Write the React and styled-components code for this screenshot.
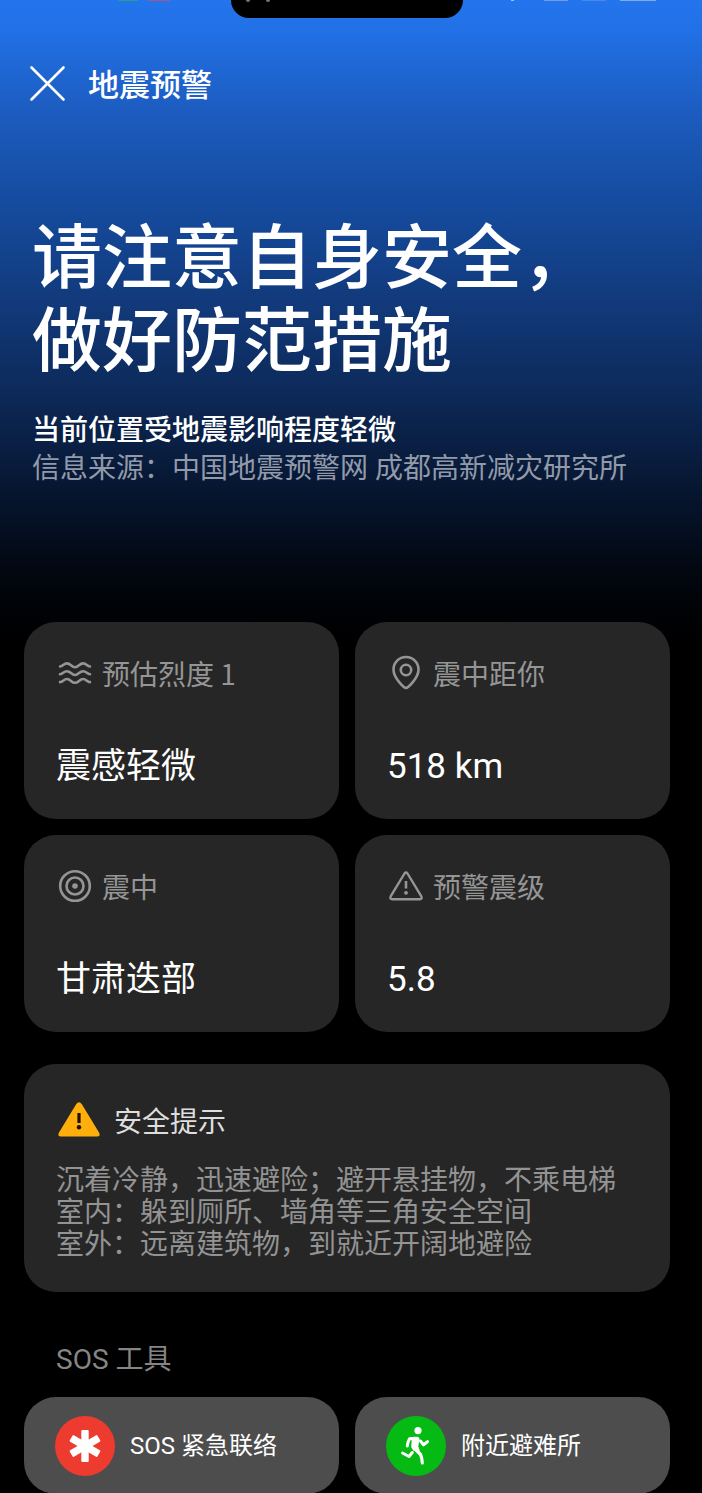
import React from "react";
import styled, { createGlobalStyle } from "styled-components";

const hanFont = `"Noto Sans CJK SC", Roboto, sans-serif`;

const GlobalStyle = createGlobalStyle`
  *, *::before, *::after { box-sizing: border-box; }
  body {
    margin: 0;
    background: #000;
    color: #fff;
    font-family: Roboto, "Noto Sans CJK SC", sans-serif;
  }
  h1, h2, h3, p, dl, dt, dd { margin: 0; font-weight: 400; }
`;

const Page = styled.div`
  background: linear-gradient(
    to bottom,
    #2474ee 0,
    #2170e5 32px,
    #1c5abc 120px,
    #154ca0 200px,
    #123a7c 300px,
    #0c2856 400px,
    #06142c 500px,
    #01040a 590px,
    #000 640px
  ) no-repeat #000;
`;

const StatusBar = styled.div`
  display: grid;
  grid-template-columns: 1fr 232px 1fr;
  height: 18px;
  padding-right: 8px;
`;

const StatusGroup = styled.div`
  display: flex;
  justify-content: ${(p) => (p.$end ? "flex-end" : "flex-start")};
  gap: ${(p) => (p.$end ? 14 : 10)}px;
  padding: ${(p) => (p.$end ? "0 38px 0 0" : "0 0 0 118px")};
`;

const StatusMark = styled.span`
  width: ${(p) => p.$width}px;
  height: 1px;
  margin-right: ${(p) => p.$space || 0}px;
  background: ${(p) => p.$color};
`;

const Island = styled.div`
  display: flex;
  gap: 16px;
  padding-left: 15px;
  background: #000;
  border-radius: 0 0 26px 26px;
`;

const IslandMark = styled.span`
  width: 4px;
  height: 2px;
  background: #777;
  border-radius: 0 0 2px 2px;
`;

const TopBar = styled.header`
  display: flex;
  align-items: center;
  gap: 20px;
  padding: 41px 28px 0;
`;

const CloseButton = styled.button`
  display: flex;
  padding: 0;
  border: 0;
  background: none;
  color: #fff;
`;

const Title = styled.h1`
  font-family: ${hanFont};
  font-size: 31px;
  line-height: 48px;
  font-weight: 500;
`;

const Hero = styled.section`
  padding: 111px 32px 134px;
`;

const Headline = styled.h2`
  font-size: 70px;
  line-height: 83px;
  font-weight: 500;
`;

const HeroText = styled.p`
  font-size: 28px;
  line-height: 38px;
  font-weight: ${(p) => (p.$muted ? 400 : 500)};
  color: ${(p) => (p.$muted ? "#929aaa" : "#fff")};
`;

const HeroNotes = styled.div`
  margin-top: 28px;
`;

const Content = styled.main`
  padding: 0 32px 0 24px;
`;

const CardGrid = styled.dl`
  display: grid;
  grid-template-columns: 1fr 1fr;
  gap: 16px;
`;

const Card = styled.div`
  padding: 32px 32px 28px;
  background: #262626;
  border-radius: 32px;
`;

const CardLabel = styled.dt`
  display: flex;
  align-items: center;
  gap: 8px;
  font-family: ${hanFont};
  font-size: 28px;
  line-height: 38px;
  color: #959595;
`;

const CardValue = styled.dd`
  margin-top: 51px;
  font-size: 35px;
  line-height: 48px;
`;

const Tips = styled.section`
  margin-top: 32px;
  padding: 36px 24px 31px 32px;
  background: #262626;
  border-radius: 32px;
`;

const TipsTitle = styled.h3`
  display: flex;
  align-items: center;
  gap: 12px;
  font-family: ${hanFont};
  font-size: 28px;
  line-height: 40px;
  color: #dedede;
`;

const TipsText = styled.p`
  margin-top: 25px;
  font-size: 28px;
  line-height: 32px;
  color: #939393;
`;

const SectionTitle = styled.h3`
  margin-top: 49px;
  padding-left: 32px;
  font-size: 28px;
  line-height: 38px;
  color: #858585;
`;

const Tools = styled.div`
  display: grid;
  grid-template-columns: 1fr 1fr;
  gap: 16px;
  margin-top: 18px;
`;

const ToolButton = styled.button`
  display: flex;
  align-items: center;
  gap: 15px;
  padding: 19px 31px 18px;
  border: 0;
  border-radius: 32px;
  background: #4d4d4d;
  color: #fff;
  font-family: inherit;
  font-size: 24px;
  line-height: 32px;
  text-align: left;
`;

const ToolBadge = styled.span`
  display: flex;
  flex: none;
  width: 60px;
  height: 60px;
  border-radius: 50%;
  background: ${(p) => p.$color};
`;

const Icon = styled.svg`
  display: block;
  flex: none;
  fill: none;
  stroke: currentColor;
  stroke-linecap: round;
  stroke-linejoin: round;
`;

const CloseIcon = () => (
  <Icon width="40" height="40" viewBox="0 0 40 40" strokeWidth="2.6" aria-hidden="true">
    <path d="M3.5 4.5 35.5 36.5M35.5 4.5 3.5 36.5" />
  </Icon>
);

const WavesIcon = () => (
  <Icon width="38" height="38" viewBox="0 0 38 38" strokeWidth="2.6" aria-hidden="true">
    {[12, 19.8, 27.6].map((y) => (
      <path
        key={y}
        d={`M4 ${y + 0.5}C7 ${y + 0.5} 7.5 ${y - 2.6} 11 ${y - 2.6}C14.500 ${y - 2.6} 15.500 ${y + 1.2} 19 ${y + 1.2}C22.500 ${y + 1.2} 23.500 ${y - 2.6} 27 ${y - 2.6}C30.500 ${y - 2.6} 31 ${y + 0.5} 34 ${y + 0.5}`}
      />
    ))}
  </Icon>
);

const PinIcon = () => (
  <Icon width="38" height="38" viewBox="0 0 38 38" strokeWidth="2.6" aria-hidden="true">
    <path d="M19 34C17.5 34 6.5 24.5 6.5 15.500A12.500 12.500 0 0 1 31.500 15.500C31.500 24.500 20.500 34 19 34Z" />
    <circle cx="19" cy="16" r="5.200" />
  </Icon>
);

const TargetIcon = () => (
  <Icon width="38" height="38" viewBox="0 0 38 38" strokeWidth="2.6" aria-hidden="true">
    <circle cx="19" cy="19" r="14.800" />
    <circle cx="19" cy="19" r="8.500" />
    <circle cx="19" cy="19" r="2.800" fill="currentColor" stroke="none" />
  </Icon>
);

const AlertIcon = () => (
  <Icon width="38" height="38" viewBox="0 0 38 38" strokeWidth="2.400" aria-hidden="true">
    <path d="M17.500 6.500Q19 4.500 20.500 6.500L34.200 29.200Q35.700 32.200 32.700 32.200H5.300Q2.300 32.200 3.800 29.200Z" />
    <path d="M19 14V21.500" strokeLinecap="butt" strokeWidth="2.600" />
    <circle cx="19" cy="25.800" r="1.900" fill="currentColor" stroke="none" />
  </Icon>
);

const WarningIcon = () => (
  <Icon width="46" height="40" viewBox="0 0 46 40" aria-hidden="true">
    <path
      d="M20.300 4Q23 0.500 25.700 4L43 32.500Q45 36.500 41 36.500H5Q1 36.500 3 32.500Z"
      fill="#ffae0c"
      stroke="none"
    />
    <path d="M23 13V23" stroke="#1c1400" strokeWidth="3.200" strokeLinecap="butt" />
    <circle cx="23" cy="27.200" r="2.200" fill="#1c1400" stroke="none" />
  </Icon>
);

const SosIcon = () => (
  <Icon width="60" height="60" viewBox="0 0 60 60" aria-hidden="true">
    {[0, 60, 120].map((angle) => (
      <rect
        key={angle}
        x="26.300"
        y="14"
        width="7.400"
        height="32"
        rx="1"
        fill="#fff"
        stroke="none"
        transform={`rotate(${angle} 30 30)`}
      />
    ))}
  </Icon>
);

const RunnerIcon = () => (
  <Icon width="60" height="60" viewBox="0 0 60 60" strokeWidth="3" aria-hidden="true">
    <circle cx="32" cy="14.600" r="3.600" fill="#fff" stroke="none" />
    <path
      d="M26.500 22 31.500 21.500Q33 21.800 32.800 23.500L31.500 30.500 33 34.500 28 34 26 31Z"
      fill="#fff"
      strokeWidth="1.500"
    />
    <path d="M29 22.300 23.500 22.800Q21.800 26 21.300 30" />
    <path d="M34.500 25 37.500 28.800 41.500 25.700" />
    <path d="M29 33 34.600 38.500Q36.200 42.500 36.300 47" strokeWidth="3.200" />
    <path d="M26.300 36.500 23 40.500 16.500 37" />
  </Icon>
);

const readings = [
  { icon: WavesIcon, label: "预估烈度 1", value: "震感轻微" },
  { icon: PinIcon, label: "震中距你", value: "518 km" },
  { icon: TargetIcon, label: "震中", value: "甘肃迭部" },
  { icon: AlertIcon, label: "预警震级", value: "5.8" },
];

const tools = [
  { icon: SosIcon, color: "#ee3b2f", label: "SOS 紧急联络" },
  { icon: RunnerIcon, color: "#05bb13", label: "附近避难所" },
];

export default function App() {
  return (
    <Page>
      <GlobalStyle />
      <StatusBar aria-hidden="true">
        <StatusGroup>
          <StatusMark $width={20} $color="#22a28c" />
          <StatusMark $width={22} $color="#a0588c" />
        </StatusGroup>
        <Island>
          <IslandMark />
          <IslandMark />
        </Island>
        <StatusGroup $end>
          <StatusMark $width={3} $space={16} $color="#9fc0f2" />
          <StatusMark $width={24} $color="#6d9fe8" />
          <StatusMark $width={24} $color="#4a88e8" />
          <StatusMark $width={36} $color="#7fabe6" />
        </StatusGroup>
      </StatusBar>
      <TopBar>
        <CloseButton type="button" aria-label="关闭">
          <CloseIcon />
        </CloseButton>
        <Title>地震预警</Title>
      </TopBar>
      <Hero>
        <Headline>
          请注意自身安全，
          <br />
          做好防范措施
        </Headline>
        <HeroNotes>
          <HeroText>当前位置受地震影响程度轻微</HeroText>
          <HeroText $muted>信息来源：中国地震预警网 成都高新减灾研究所</HeroText>
        </HeroNotes>
      </Hero>
      <Content>
        <CardGrid>
          {readings.map(({ icon: ReadingIcon, label, value }) => (
            <Card key={label}>
              <CardLabel>
                <ReadingIcon />
                {label}
              </CardLabel>
              <CardValue>{value}</CardValue>
            </Card>
          ))}
        </CardGrid>
        <Tips>
          <TipsTitle>
            <WarningIcon />
            安全提示
          </TipsTitle>
          <TipsText>
            沉着冷静，迅速避险；避开悬挂物，不乘电梯
            <br />
            室内：躲到厕所、墙角等三角安全空间
            <br />
            室外：远离建筑物，到就近开阔地避险
          </TipsText>
        </Tips>
        <SectionTitle>SOS 工具</SectionTitle>
        <Tools>
          {tools.map(({ icon: ToolIcon, color, label }) => (
            <ToolButton key={label} type="button">
              <ToolBadge $color={color}>
                <ToolIcon />
              </ToolBadge>
              {label}
            </ToolButton>
          ))}
        </Tools>
      </Content>
    </Page>
  );
}
